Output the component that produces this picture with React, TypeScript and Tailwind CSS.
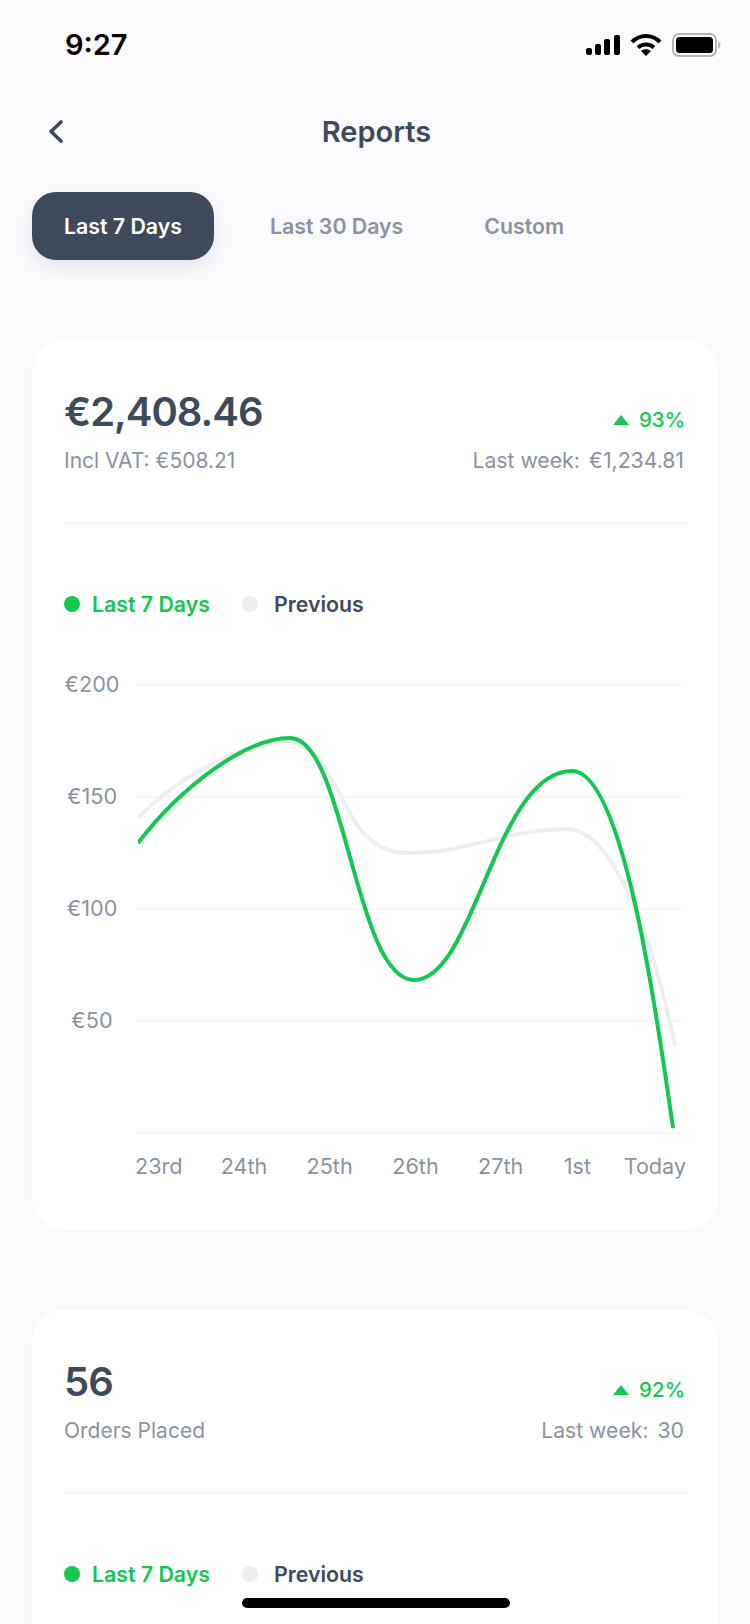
import { ReactNode } from "react"

const greenPath =
	"M138 843 C 180 788, 245 738, 290 738 C 345 738, 355 980, 414 980 C 475 980, 495 771, 572 771 C 622 771, 655 1000, 673 1128"
const greyPath =
	"M138 818 C 180 775, 245 742, 285 742 C 345 742, 335 853, 407 853 C 470 853, 505 829, 567 829 C 610 829, 650 925, 675 1046"

const gridLines = [685, 797, 909, 1021, 1133]
const yLabels = ["€200", "€150", "€100", "€50"]
const xLabels = [
	{ label: "23rd", width: "w-[86px]" },
	{ label: "24th", width: "w-[86px]" },
	{ label: "25th", width: "w-[86px]" },
	{ label: "26th", width: "w-[86px]" },
	{ label: "27th", width: "w-[86px]" },
	{ label: "1st", width: "w-[60px]" },
]

function StatusBar() {
	return (
		<div className="flex h-[90px] items-center justify-between pl-[65px] pr-[29px]">
			<span className="text-[29px] font-semibold text-black">9:27</span>
			<div className="flex items-center gap-[10px]">
				<svg width="34" height="20" viewBox="0 0 34 20" fill="#000">
					<rect x="0" y="13" width="6" height="7" rx="2" />
					<rect x="9" y="9" width="6" height="11" rx="2" />
					<rect x="18" y="4" width="6" height="16" rx="2" />
					<rect x="28" y="0" width="6" height="20" rx="2" />
				</svg>
				<svg width="32" height="24" viewBox="0 0 32 24" fill="none" stroke="#000" strokeWidth="4">
					<path d="M2 9 C 10 1, 22 1, 30 9" />
					<path d="M8 14.5 C 12.5 10.5, 19.5 10.5, 24 14.5" />
					<path d="M16 23 L 11 18 C 14 15.5, 18 15.5, 21 18 Z" fill="#000" stroke="none" />
				</svg>
				<svg width="49" height="24" viewBox="0 0 49 24">
					<rect x="1" y="1" width="43" height="22" rx="6" fill="none" stroke="#AEB6BC" strokeWidth="2" />
					<rect x="4" y="4" width="37" height="16" rx="3.5" fill="#000" />
					<path d="M46 8.5 C 48 9.5, 48.5 10.5, 48.5 12 C 48.5 13.5, 48 14.5, 46 15.5 Z" fill="#AEB6BC" />
				</svg>
			</div>
		</div>
	)
}

function Triangle() {
	return (
		<svg width="16" height="10" viewBox="0 0 16 10" fill="#12C84E">
			<path d="M8 0 L16 10 L0 10 Z" />
		</svg>
	)
}

function Chart() {
	return (
		<>
			<div className="mt-[55px] flex gap-[18px]">
				<div className="-mt-[1px] flex w-[56px] flex-col items-center gap-[88px]">
					{yLabels.map((label) => (
						<span key={label} className="h-[24px] text-[21.7px] leading-[24px] text-[#8A93A0]">
							{label}
						</span>
					))}
				</div>
				<svg width="546" height="472" viewBox="138 673 546 472" fill="none">
					{gridLines.map((y) => (
						<line key={y} x1="138" x2="684" y1={y} y2={y} stroke="#F6F7F8" strokeWidth="2" />
					))}
					<path d={greyPath} stroke="#ECEEEF" strokeWidth="4" />
					<path d={greenPath} stroke="#12C84E" strokeWidth="4" />
				</svg>
			</div>
			<div className="mt-[7px] flex pl-[71px] text-[21.6px] leading-[28px] text-[#8A93A0]">
				{xLabels.map((item) => (
					<span key={item.label} className={item.width}>
						{item.label}
					</span>
				))}
				<span>Today</span>
			</div>
		</>
	)
}

function Card({
	value,
	caption,
	change,
	lastWeek,
	children,
}: {
	value: string
	caption: string
	change: string
	lastWeek: string
	children?: ReactNode
}) {
	return (
		<div className="min-h-[400px] rounded-[32px] bg-white px-[32px] pb-[50px] pt-[48px] shadow-[0_0_24px_rgba(60,70,90,0.025)]">
			<div className="flex justify-between pr-[1px]">
				<span className="text-[40px] font-semibold leading-[48px] tracking-[-1px] text-[#3E4A5B]">{value}</span>
				<div className="mb-[2px] flex items-center gap-[10px] self-end">
					<Triangle />
					<span className="text-[20.5px] font-medium leading-[28px] text-[#12C84E]">{change}</span>
				</div>
			</div>
			<div className="mt-[10px] flex justify-between pr-[2px] pt-[1px] text-[21px] leading-[27px] text-[#8A93A0]">
				<span>{caption}</span>
				<div className="flex gap-[9px] text-[21.2px]">
					<span>Last week:</span>
					<span>{lastWeek}</span>
				</div>
			</div>
			<div className="mt-[48px] h-[2px] bg-[#F6F7F8]" />
			<div className="mt-[66px] flex items-center text-[21.3px] leading-[28px]">
				<span className="h-[16px] w-[16px] rounded-full bg-[#12C84E]" />
				<span className="ml-[12px] w-[150px] font-semibold text-[#12C84E]">Last 7 Days</span>
				<span className="h-[16px] w-[16px] rounded-full bg-[#ECEFF1]" />
				<span className="ml-[16px] font-semibold text-[#3E4A5B]">Previous</span>
			</div>
			{children}
		</div>
	)
}

export default function App() {
	return (
		<div className="relative h-[1624px] w-[750px] overflow-hidden bg-[#FBFBFE] font-['Inter',sans-serif]">
			<StatusBar />

			<div className="relative flex h-[82px] items-center justify-center pl-[3px] pt-[2px]">
				<svg
					className="absolute left-[47px] top-[29px]"
					width="17"
					height="25"
					viewBox="0 0 17 25"
					fill="none"
					stroke="#3E4A5B"
					strokeWidth="3.6"
					strokeLinecap="round"
					strokeLinejoin="round"
				>
					<path d="M14 3 L4 12.5 L14 22" />
				</svg>
				<h1 className="text-[29px] font-semibold text-[#3E4A5B]">Reports</h1>
			</div>

			<div className="mt-[20px] flex items-center px-[32px] text-[21.3px] font-semibold">
				<button className="h-[68px] w-[182px] rounded-[24px] bg-[#3E4A5B] pt-[1px] text-white shadow-[0_8px_20px_rgba(62,74,91,0.12)]">
					Last 7 Days
				</button>
				<button className="ml-[56px] pt-[1px] text-[#8A93A0]">Last 30 Days</button>
				<button className="ml-[81px] pt-[1px] text-[#8A93A0]">Custom</button>
			</div>

			<div className="mt-[80px] flex flex-col gap-[80px] px-[32px]">
				<Card value="€2,408.46" caption="Incl VAT: €508.21" change="93%" lastWeek="€1,234.81">
					<Chart />
				</Card>
				<Card value="56" caption="Orders Placed" change="92%" lastWeek="30" />
			</div>

			<div className="absolute bottom-[16px] left-[242px] h-[10px] w-[268px] rounded-full bg-black" />
		</div>
	)
}
